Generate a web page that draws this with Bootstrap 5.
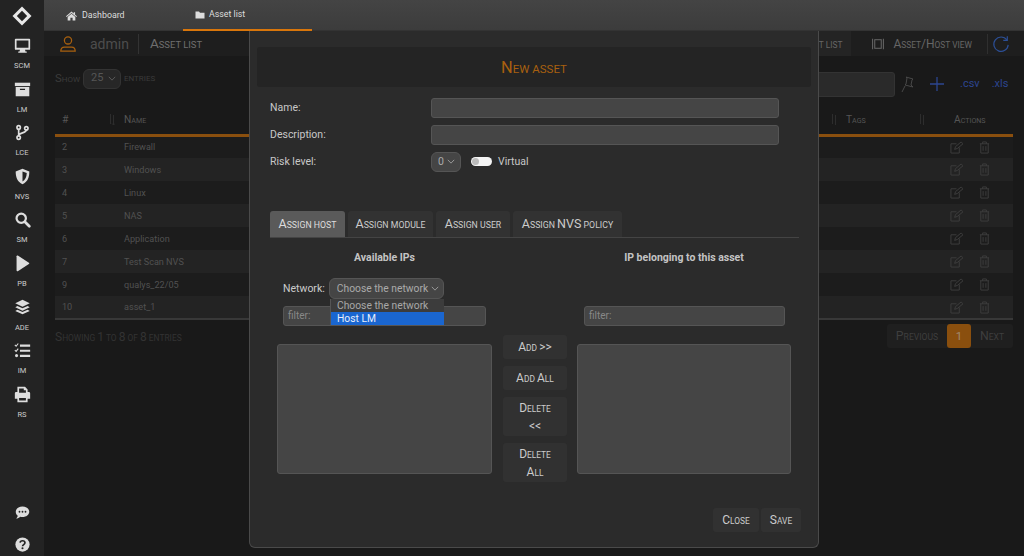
<!DOCTYPE html>
<html lang="en" data-bs-theme="dark">
<head>
<meta charset="utf-8">
<title>Asset list</title>
<link href="https://cdn.jsdelivr.net/npm/bootstrap@5.3.0/dist/css/bootstrap.min.css" rel="stylesheet">
<style>
html,body{height:556px;overflow:hidden;background:#191919}
body{font-family:Roboto,"Liberation Sans",sans-serif;font-size:10.5px;color:#ccc}
.sc{font-family:Roboto,"Liberation Sans",sans-serif;text-transform:uppercase;font-size:calc(var(--fs)*.7);white-space:nowrap}
.sc i{font-style:normal;font-size:var(--fs)}
.rail{width:44px;height:556px;background:#232323;flex:none}
.rail-item{height:43.6px;color:#ccc;font-size:7.5px;line-height:9px;font-weight:400}
.rail-item svg{width:17px;height:17px;margin-bottom:7px;display:block}
.rail-logo{height:32px;flex:none;margin-bottom:5px}
.rail-logo svg{width:20px;height:20px}
.rail-foot svg{width:15px;height:15px;display:block}
.rail-foot{gap:17px;padding-bottom:4px}
.topbar{height:31px;background:linear-gradient(#444,#3c3c3c);border-bottom:1px solid #333;flex:none}
.toplink{height:31px;font-size:8.8px;color:#ddd;padding:0 0 0 22px;text-decoration:none;gap:5px}
.toplink svg{width:11px;height:10px}
.toplink.one{width:139px}
.toplink.two{width:129px;border-bottom:2px solid #d9760b;padding-left:12px;gap:4px}
.toplink.two svg{width:10px}
.main{flex:1;min-width:0;position:relative;height:556px}
.head{height:25px;background:#1e1e1e;padding-left:15px;color:#555}
.head .who{font-size:14px;color:#4d4d4d;margin-left:13px;padding-right:9px;border-right:1px solid #333;line-height:20px}
.head .ttl{--fs:13.5px;color:#6e6e6e;margin-left:11px}
.headtab{--fs:12px;height:25px;color:#666;padding:0 9px;background:#242424}
.headtab.plain{background:none;padding:0 15px 0 21px;gap:9px;border-right:1px solid #2f2f2f;height:20px}
.headtab .sc{color:#666}
.refresh{width:18px;height:18px;margin:0 14px 0 0;color:#2c4f96}
.content{padding:12px 11px 0}
.toolbar{--fs:11.4px;height:29px;color:#3b3b3b}
.show-group{height:21px;align-self:flex-start}
.toolbar .form-select{width:38px;height:20px;font-size:11px;padding:0 0 0 7px;margin:0 3px;background-color:#272727;border-color:#333;color:#565656;background-image:url("data:image/svg+xml,%3csvg xmlns='http://www.w3.org/2000/svg' viewBox='0 0 10 6'%3e%3cpath fill='none' stroke='%23666' d='M1 1l4 4 4-4'/%3e%3c/svg%3e");background-size:8px;background-position:right 4px center}
.searchbox{width:210px;height:25px;background:#2a2a2a;border:1px solid #333;border-radius:3px;margin-top:4px}
.tools{padding-top:3px;width:118px}
.pin{margin-left:6px}.plus{margin-left:15px}.csv{margin-left:16px}.xls{margin-left:12px}
.tool-link{color:#2c4590;font-size:11px}
.dt{table-layout:fixed;width:958px;margin:6px 0 0;color:#515151;font-size:9.1px;--bs-table-bg:transparent}
.dt th{--fs:10.2px;height:32px;font-weight:400;font-size:10.5px;color:#555;padding:3px 7px 0;vertical-align:middle;border-bottom:3px solid #8a4f0e;position:relative}
.dt td{height:23px;padding:2px 7px 0;vertical-align:middle;border:0}
.dt tbody tr:nth-child(even){background:#232323}
.dt tbody tr:nth-child(odd){background:#1c1c1c}
.dt tbody tr:last-child td{border-bottom:2px solid #383838}
.c-id{width:62px}.c-mid{width:722px}.c-tags{width:108px}.c-act{width:66px}
.dt td.c-act{padding:0 0 0 3px}
.sort{position:absolute;top:10px;width:6px;height:13px;color:#2d2d2d}
.sort-a{left:54px}.sort-b{right:2px}.sort-c{left:80px}
.act-ico{width:13px;height:13px;color:#3f3f3f}
.act-row{gap:15px}
.info{--fs:12px;color:#333;margin-top:4px}
.pager{--fs:12.3px;height:24px;background:#1f1f1f;border-radius:3px;color:#3e3e3e;width:126px}
.pager span{line-height:24px}
.pager .p{width:60px;text-align:center}
.pager .n{flex:1;text-align:center}
.pager .cur{background:#8a4f0e;color:#a08a70;width:24px;text-align:center;border-radius:3px;font-size:11.5px}
.sheet{position:absolute;left:205px;top:31px;width:570px;height:517px;background:#2b2b2b;border:1px solid #4a4a4a;border-top:0;border-radius:0 0 6px 6px;padding:16px 7px 0}
.sheet-title{--fs:16.4px;height:40px;background:#242424;border-radius:3px;color:#a8600f;padding-top:3px}
.sheet-form{padding:7px 13px 0}
.f-row{height:27px;color:#c8c8c8;font-size:10.5px}
.f-lab{width:161px;flex:none}
.f-input{width:348px;height:20px;background:#454545;border:1px solid #555;border-radius:3px;padding:0 6px;font-size:10px;color:#bbb;min-height:0}
.f-input:focus{background:#454545;box-shadow:none;border-color:#555}
.risk,.net-sel{background-image:url("data:image/svg+xml,%3csvg xmlns='http://www.w3.org/2000/svg' viewBox='0 0 10 6'%3e%3cpath fill='none' stroke='%23aaa' d='M1 1l4 4 4-4'/%3e%3c/svg%3e")}
.risk{width:30px;height:20px;font-size:10.5px;padding:0 0 0 6px;background-color:#454545;border-color:#555;color:#aaa;background-size:8px;background-position:right 5px center;min-height:0}
.sw{width:21px;height:9px;background:#f4f4f4;border-radius:5px;position:relative;margin:0 6px 0 10px}
.sw::before{content:"";position:absolute;left:1px;top:1px;width:7px;height:7px;border-radius:50%;background:#bbb}
.tabs{--fs:12.5px;margin:36px 12px 0 13px;border-bottom:1px solid #444;height:27px;gap:3px}
.tabx{height:26px;background:#323232;border-radius:3px 3px 0 0;line-height:25px;color:#ccc;text-align:center}
.tabx.on{background:#5a5a5a;color:#ddd}
.t1{width:75px}.t2{width:85px}.t3{width:74px}.t4{width:109px}
.assign{display:grid;grid-template-columns:229px 72px 229px;margin:0 0 0 13px}
.col-l{padding:0 7px;position:relative}
.col-r{padding:0 9px 0 6px}
.pane-title{font-weight:700;font-size:10.5px;text-align:center;color:#c4c4c4;height:40px;line-height:40px}
.net{height:21px;padding-left:6px;color:#ccc;gap:4px;margin-bottom:7px}
.net-sel{width:115px;height:21px;font-size:10.3px;padding:0 0 0 7px;background-color:#454545;border-color:#555;color:#aaa;background-size:8px;background-position:right 4px center;min-height:0}
.droplist{position:absolute;left:60px;top:61px;width:114px;height:26px;background:#3c3c3c;font-size:10.3px;line-height:13px;color:#a8a8a8;z-index:2;border-left:1px solid #555;padding:0}
.droplist div{padding-left:6px;height:13px}
.droplist .sel{background:#1a66d0;color:#e8eefb}
.filter{height:20px;background:#454545;border:1px solid #555;border-radius:3px;color:#888;font-size:10px;padding:0 4px;line-height:18px;margin:0 6px}
.col-r .filter{margin:0 6px 0 7px}
.box{height:130px;background:#454545;border:1px solid #555;border-radius:3px;margin-top:18px}
.btn-x{--fs:12px;background:#313131;border:0;border-radius:3px;color:#ccc;padding:0;line-height:15px;width:64px;--bs-btn-hover-bg:#313131}
.mids{padding:97px 4px 0;gap:7px}
.h24{height:24px}.h39{height:39px}
.net-spacer{height:28px}
.foot{position:absolute;right:17px;bottom:15px;gap:2px}
.foot .btn-x{height:24px}
.foot .w-c{width:46px}.foot .w-s{width:40px}
</style>
</head>
<body class="d-flex m-0">

<nav class="rail d-flex flex-column align-items-center">
  <div class="rail-logo d-flex align-items-center justify-content-center">
    <svg viewBox="0 0 20 20"><path d="M10 .5l2 2 7.500 7.500-9.500 9.500L.5 10z" fill="#e8e8e8"/><path d="M10 4.800L15.200 10 10 15.200 4.800 10z" fill="#232323"/></svg>
  </div>
  <div class="rail-item d-flex flex-column align-items-center"><svg viewBox="0 0 20 20" fill="#ddd"><path fill-rule="evenodd" d="M2 2h16a1 1 0 011 1v11a1 1 0 01-1 1h-5l.5 2H15v1.500H5V17h1.500l.5-2H2a1 1 0 01-1-1V3a1 1 0 011-1zm1 2v8.500h14V4z"/></svg>SCM</div>
  <div class="rail-item d-flex flex-column align-items-center"><svg viewBox="0 0 20 20" fill="#ddd"><path d="M1 2h18v4H1z"/><path fill-rule="evenodd" d="M2 7h16v11H2zm5 2v1.500h6V9z"/></svg>LM</div>
  <div class="rail-item d-flex flex-column align-items-center"><svg viewBox="0 0 20 20" fill="none" stroke="#ddd" stroke-width="2"><circle cx="5.500" cy="4" r="2"/><circle cx="5.500" cy="16" r="2"/><circle cx="14.500" cy="5" r="2"/><path d="M5.500 6v8M14.500 7c0 4-9 3-9 7"/></svg>LCE</div>
  <div class="rail-item d-flex flex-column align-items-center"><svg viewBox="0 0 20 20"><path d="M10 1l8 3c0 7-2 12-8 15C4 16 2 11 2 4z" fill="#ddd"/><path d="M10 4l5 2c-.2 4.500-1.500 7.700-5 10z" fill="#232323"/></svg>NVS</div>
  <div class="rail-item d-flex flex-column align-items-center"><svg viewBox="0 0 20 20" fill="none" stroke="#ddd"><circle cx="8.500" cy="8.500" r="5.500" stroke-width="2.600"/><path d="M13 13l5 5" stroke-width="3.200" stroke-linecap="round"/></svg>SM</div>
  <div class="rail-item d-flex flex-column align-items-center"><svg viewBox="0 0 20 20" fill="#ddd"><path d="M3 1.500c0-.8.800-1.200 1.500-.8l13 8.300c.6.400.6 1.300 0 1.700l-13 8.300c-.7.400-1.500 0-1.500-.8z"/></svg>PB</div>
  <div class="rail-item d-flex flex-column align-items-center"><svg viewBox="0 0 20 20" fill="#ddd"><path d="M10 1l8.500 4L10 9 1.500 5z"/><path d="M4 8.300L10 11l6-2.700 2.500 1.400L10 13.700 1.500 9.700z"/><path d="M4 12.600l6 2.700 6-2.700 2.500 1.400-8.500 4-8.500-4z"/></svg>ADE</div>
  <div class="rail-item d-flex flex-column align-items-center"><svg viewBox="0 0 20 20" fill="#ddd"><path d="M7 3h12v2.500H7zM7 9h12v2.500H7zM7 15h12v2.500H7z"/><circle cx="3" cy="16" r="1.800"/><path d="M1 9.500l1.500 1.500L5 7.800M1 3.500L2.500 5 5 1.800" fill="none" stroke="#ddd" stroke-width="1.300"/></svg>IM</div>
  <div class="rail-item d-flex flex-column align-items-center"><svg viewBox="0 0 20 20" fill="#ddd"><path fill-rule="evenodd" d="M4 1h9l3 3v3h1.500A1.500 1.500 0 0119 8.500V15h-3v4H4v-4H1V8.500A1.500 1.500 0 012.500 7H4zm2 2v5h8V5h-2.500V3zm0 11v3h8v-3z"/></svg>RS</div>
  <div class="rail-foot d-flex flex-column align-items-center mt-auto">
    <svg viewBox="0 0 20 20"><path d="M10 2c5 0 9 3 9 7s-4 7-9 7c-1 0-2-.1-3-.4C5.500 17 3.500 18 1.500 18c1-.9 2-2.200 2.200-3.800C2 13 1 11.100 1 9c0-4 4-7 9-7z" fill="#ddd"/><circle cx="6" cy="9" r="1.200" fill="#232323"/><circle cx="10" cy="9" r="1.200" fill="#232323"/><circle cx="14" cy="9" r="1.200" fill="#232323"/></svg>
    <svg viewBox="0 0 20 20"><circle cx="10" cy="10" r="9.500" fill="#ddd"/><path d="M6.800 7.500C7 5.500 8.500 5 10 5c2 0 3.300 1.200 3.300 2.800 0 2.300-3.200 2.400-3.200 4.400" fill="none" stroke="#232323" stroke-width="2.200"/><circle cx="10" cy="15" r="1.400" fill="#232323"/></svg>
  </div>
</nav>

<div class="main d-flex flex-column">
  <div class="topbar d-flex">
    <a class="toplink one d-flex align-items-center" href="#"><svg viewBox="0 0 20 18" fill="#ddd"><path d="M10 1L0 9.500l1.200 1.400L10 3.500l8.800 7.400L20 9.500 16.500 6.500V2h-2.500v2.400z"/><path d="M10 5l7 6v6h-5v-5H8v5H3v-6z"/></svg>Dashboard</a>
    <a class="toplink two d-flex align-items-center" href="#"><svg viewBox="0 0 20 16" fill="#ddd"><path d="M1 1h7l2 2.500h9V15H1z"/></svg>Asset list</a>
  </div>

  <div class="head d-flex align-items-center">
    <svg width="18" height="18" viewBox="0 0 20 20" fill="none" stroke="#a8600f" stroke-width="1.400"><circle cx="10" cy="6" r="4"/><path d="M2 18c0-3 1.500-4.500 4-4.500h8c2.500 0 4 1.500 4 4.500z"/></svg>
    <span class="who">admin</span><span class="ttl sc"><i>A</i>sset list</span>
    <div class="ms-auto headtab d-flex align-items-center"><span class="sc"><i>A</i>sset list</span></div>
    <div class="headtab plain d-flex align-items-center"><svg width="12" height="12" viewBox="0 0 14 12" fill="none" stroke="#666" stroke-width="1.200"><path d="M.7 0v12M13.300 0v12"/><rect x="3.200" y="1" width="7.600" height="10"/></svg><span class="sc"><i>A</i>sset<i>/H</i>ost view</span></div>
    <svg class="refresh ms-1" viewBox="0 0 20 20" fill="none" stroke="currentColor" stroke-width="1.300"><path d="M16.500 5.500A8 8 0 1018 11"/><path d="M17 1.500v4.500h-4.500"/></svg>
  </div>

  <div class="content">
    <div class="toolbar d-flex">
      <div class="show-group d-flex align-items-center">
        <span class="sc"><i>S</i>how</span>
        <select class="form-select" aria-label="entries"><option>25</option></select>
        <span class="sc">entries</span>
      </div>
      <div class="searchbox ms-auto"></div>
      <div class="tools d-flex align-items-center">
        <svg class="pin" width="14" height="17" viewBox="0 0 14 17" fill="none" stroke="#484848"><path d="M5 1l7 2-1 1-1 5 2 2-8-2 1-1 1-6zM4 10l-3 6"/></svg>
        <svg class="plus" width="14" height="14" viewBox="0 0 14 14" stroke="#2c4590" stroke-width="1.300"><path d="M7 0v14M0 7h14"/></svg>
        <span class="tool-link csv">.csv</span>
        <span class="tool-link xls">.xls</span>
      </div>
    </div>

    <table class="table dt">
      <thead>
        <tr>
          <th class="c-id">#<svg class="sort sort-a" viewBox="0 0 6 13" fill="none" stroke="currentColor"><path d="M1.500 11V1M4.500 2v10M3 10.500l1.500 1.500L6 10.500"/></svg></th>
          <th class="c-mid"><span class="sc"><i>N</i>ame</span><svg class="sort sort-b" viewBox="0 0 6 13" fill="none" stroke="currentColor"><path d="M1.500 11V1M4.500 2v10"/></svg></th>
          <th class="c-tags"><span class="sc"><i>T</i>ags</span><svg class="sort sort-c" viewBox="0 0 6 13" fill="none" stroke="currentColor"><path d="M1.500 11V1M4.500 2v10"/></svg></th>
          <th class="c-act"><span class="sc"><i>A</i>ctions</span></th>
        </tr>
      </thead>
      <tbody>
        <tr><td>2</td><td>Firewall</td><td></td><td class="c-act"><div class="act-row d-flex"><svg class="act-ico" viewBox="0 0 14 14" fill="none" stroke="currentColor"><path d="M10 7v6H1V3h6M5 9l1-3 6-5 2 2-6 5z"/></svg><svg class="act-ico" viewBox="0 0 14 14" fill="none" stroke="currentColor"><path d="M2 3h10M5 3V1h4v2M3 3v10h8V3M5.500 5.500v5M8.500 5.500v5"/></svg></div></td></tr>
        <tr><td>3</td><td>Windows</td><td></td><td class="c-act"><div class="act-row d-flex"><svg class="act-ico" viewBox="0 0 14 14" fill="none" stroke="currentColor"><path d="M10 7v6H1V3h6M5 9l1-3 6-5 2 2-6 5z"/></svg><svg class="act-ico" viewBox="0 0 14 14" fill="none" stroke="currentColor"><path d="M2 3h10M5 3V1h4v2M3 3v10h8V3M5.500 5.500v5M8.500 5.500v5"/></svg></div></td></tr>
        <tr><td>4</td><td>Linux</td><td></td><td class="c-act"><div class="act-row d-flex"><svg class="act-ico" viewBox="0 0 14 14" fill="none" stroke="currentColor"><path d="M10 7v6H1V3h6M5 9l1-3 6-5 2 2-6 5z"/></svg><svg class="act-ico" viewBox="0 0 14 14" fill="none" stroke="currentColor"><path d="M2 3h10M5 3V1h4v2M3 3v10h8V3M5.500 5.500v5M8.500 5.500v5"/></svg></div></td></tr>
        <tr><td>5</td><td>NAS</td><td></td><td class="c-act"><div class="act-row d-flex"><svg class="act-ico" viewBox="0 0 14 14" fill="none" stroke="currentColor"><path d="M10 7v6H1V3h6M5 9l1-3 6-5 2 2-6 5z"/></svg><svg class="act-ico" viewBox="0 0 14 14" fill="none" stroke="currentColor"><path d="M2 3h10M5 3V1h4v2M3 3v10h8V3M5.500 5.500v5M8.500 5.500v5"/></svg></div></td></tr>
        <tr><td>6</td><td>Application</td><td></td><td class="c-act"><div class="act-row d-flex"><svg class="act-ico" viewBox="0 0 14 14" fill="none" stroke="currentColor"><path d="M10 7v6H1V3h6M5 9l1-3 6-5 2 2-6 5z"/></svg><svg class="act-ico" viewBox="0 0 14 14" fill="none" stroke="currentColor"><path d="M2 3h10M5 3V1h4v2M3 3v10h8V3M5.500 5.500v5M8.500 5.500v5"/></svg></div></td></tr>
        <tr><td>7</td><td>Test Scan NVS</td><td></td><td class="c-act"><div class="act-row d-flex"><svg class="act-ico" viewBox="0 0 14 14" fill="none" stroke="currentColor"><path d="M10 7v6H1V3h6M5 9l1-3 6-5 2 2-6 5z"/></svg><svg class="act-ico" viewBox="0 0 14 14" fill="none" stroke="currentColor"><path d="M2 3h10M5 3V1h4v2M3 3v10h8V3M5.500 5.500v5M8.500 5.500v5"/></svg></div></td></tr>
        <tr><td>9</td><td>qualys_22/05</td><td></td><td class="c-act"><div class="act-row d-flex"><svg class="act-ico" viewBox="0 0 14 14" fill="none" stroke="currentColor"><path d="M10 7v6H1V3h6M5 9l1-3 6-5 2 2-6 5z"/></svg><svg class="act-ico" viewBox="0 0 14 14" fill="none" stroke="currentColor"><path d="M2 3h10M5 3V1h4v2M3 3v10h8V3M5.500 5.500v5M8.500 5.500v5"/></svg></div></td></tr>
        <tr><td>10</td><td>asset_1</td><td></td><td class="c-act"><div class="act-row d-flex"><svg class="act-ico" viewBox="0 0 14 14" fill="none" stroke="currentColor"><path d="M10 7v6H1V3h6M5 9l1-3 6-5 2 2-6 5z"/></svg><svg class="act-ico" viewBox="0 0 14 14" fill="none" stroke="currentColor"><path d="M2 3h10M5 3V1h4v2M3 3v10h8V3M5.500 5.500v5M8.500 5.500v5"/></svg></div></td></tr>
      </tbody>
    </table>
    <div class="d-flex justify-content-between align-items-start info">
      <span class="sc mt-1"><i>S</i>howing <i>1</i> to <i>8</i> of <i>8</i> entries</span>
      <div class="pager d-flex"><span class="p sc"><i>P</i>revious</span><span class="cur">1</span><span class="n sc"><i>N</i>ext</span></div>
    </div>
  </div>

  <div class="sheet">
    <div class="sheet-title d-flex align-items-center justify-content-center"><span class="sc"><i>N</i>ew asset</span></div>
    <div class="sheet-form">
      <div class="f-row d-flex align-items-center"><span class="f-lab">Name:</span><input class="form-control f-input" aria-label="Name"></div>
      <div class="f-row d-flex align-items-center"><span class="f-lab">Description:</span><input class="form-control f-input" aria-label="Description"></div>
      <div class="f-row d-flex align-items-center"><span class="f-lab">Risk level:</span><select class="form-select risk" aria-label="Risk"><option>0</option></select><span class="sw"></span><span>Virtual</span></div>
    </div>
    <div class="tabs d-flex">
      <div class="tabx t1 on"><span class="sc"><i>A</i>ssign host</span></div><div class="tabx t2"><span class="sc"><i>A</i>ssign module</span></div><div class="tabx t3"><span class="sc"><i>A</i>ssign user</span></div><div class="tabx t4"><span class="sc"><i>A</i>ssign <i>NVS</i> policy</span></div>
    </div>
    <div class="assign">
      <div class="col-l">
        <div class="pane-title">Available IPs</div>
        <div class="net d-flex align-items-center"><span>Network:</span><select class="form-select net-sel" aria-label="Network"><option>Choose the network</option></select></div>
        <div class="droplist"><div>Choose the network</div><div class="sel">Host LM</div></div>
        <div class="filter">filter:</div>
        <div class="box"></div>
      </div>
      <div class="mids d-flex flex-column">
        <button class="btn btn-x h24"><span class="sc"><i>A</i>dd <i>&gt;&gt;</i></span></button>
        <button class="btn btn-x h24"><span class="sc"><i>A</i>dd <i>A</i>ll</span></button>
        <button class="btn btn-x h39"><span class="sc"><i>D</i>elete<br><i>&lt;&lt;</i></span></button>
        <button class="btn btn-x h39"><span class="sc"><i>D</i>elete<br><i>A</i>ll</span></button>
      </div>
      <div class="col-r">
        <div class="pane-title">IP belonging to this asset</div>
        <div class="net-spacer"></div>
        <div class="filter">filter:</div>
        <div class="box"></div>
      </div>
    </div>
    <div class="foot d-flex">
      <button class="btn btn-x w-c"><span class="sc"><i>C</i>lose</span></button>
      <button class="btn btn-x w-s"><span class="sc"><i>S</i>ave</span></button>
    </div>
  </div>
</div>

<script src="https://cdn.jsdelivr.net/npm/bootstrap@5.3.0/dist/js/bootstrap.bundle.min.js"></script>
</body>
</html>
